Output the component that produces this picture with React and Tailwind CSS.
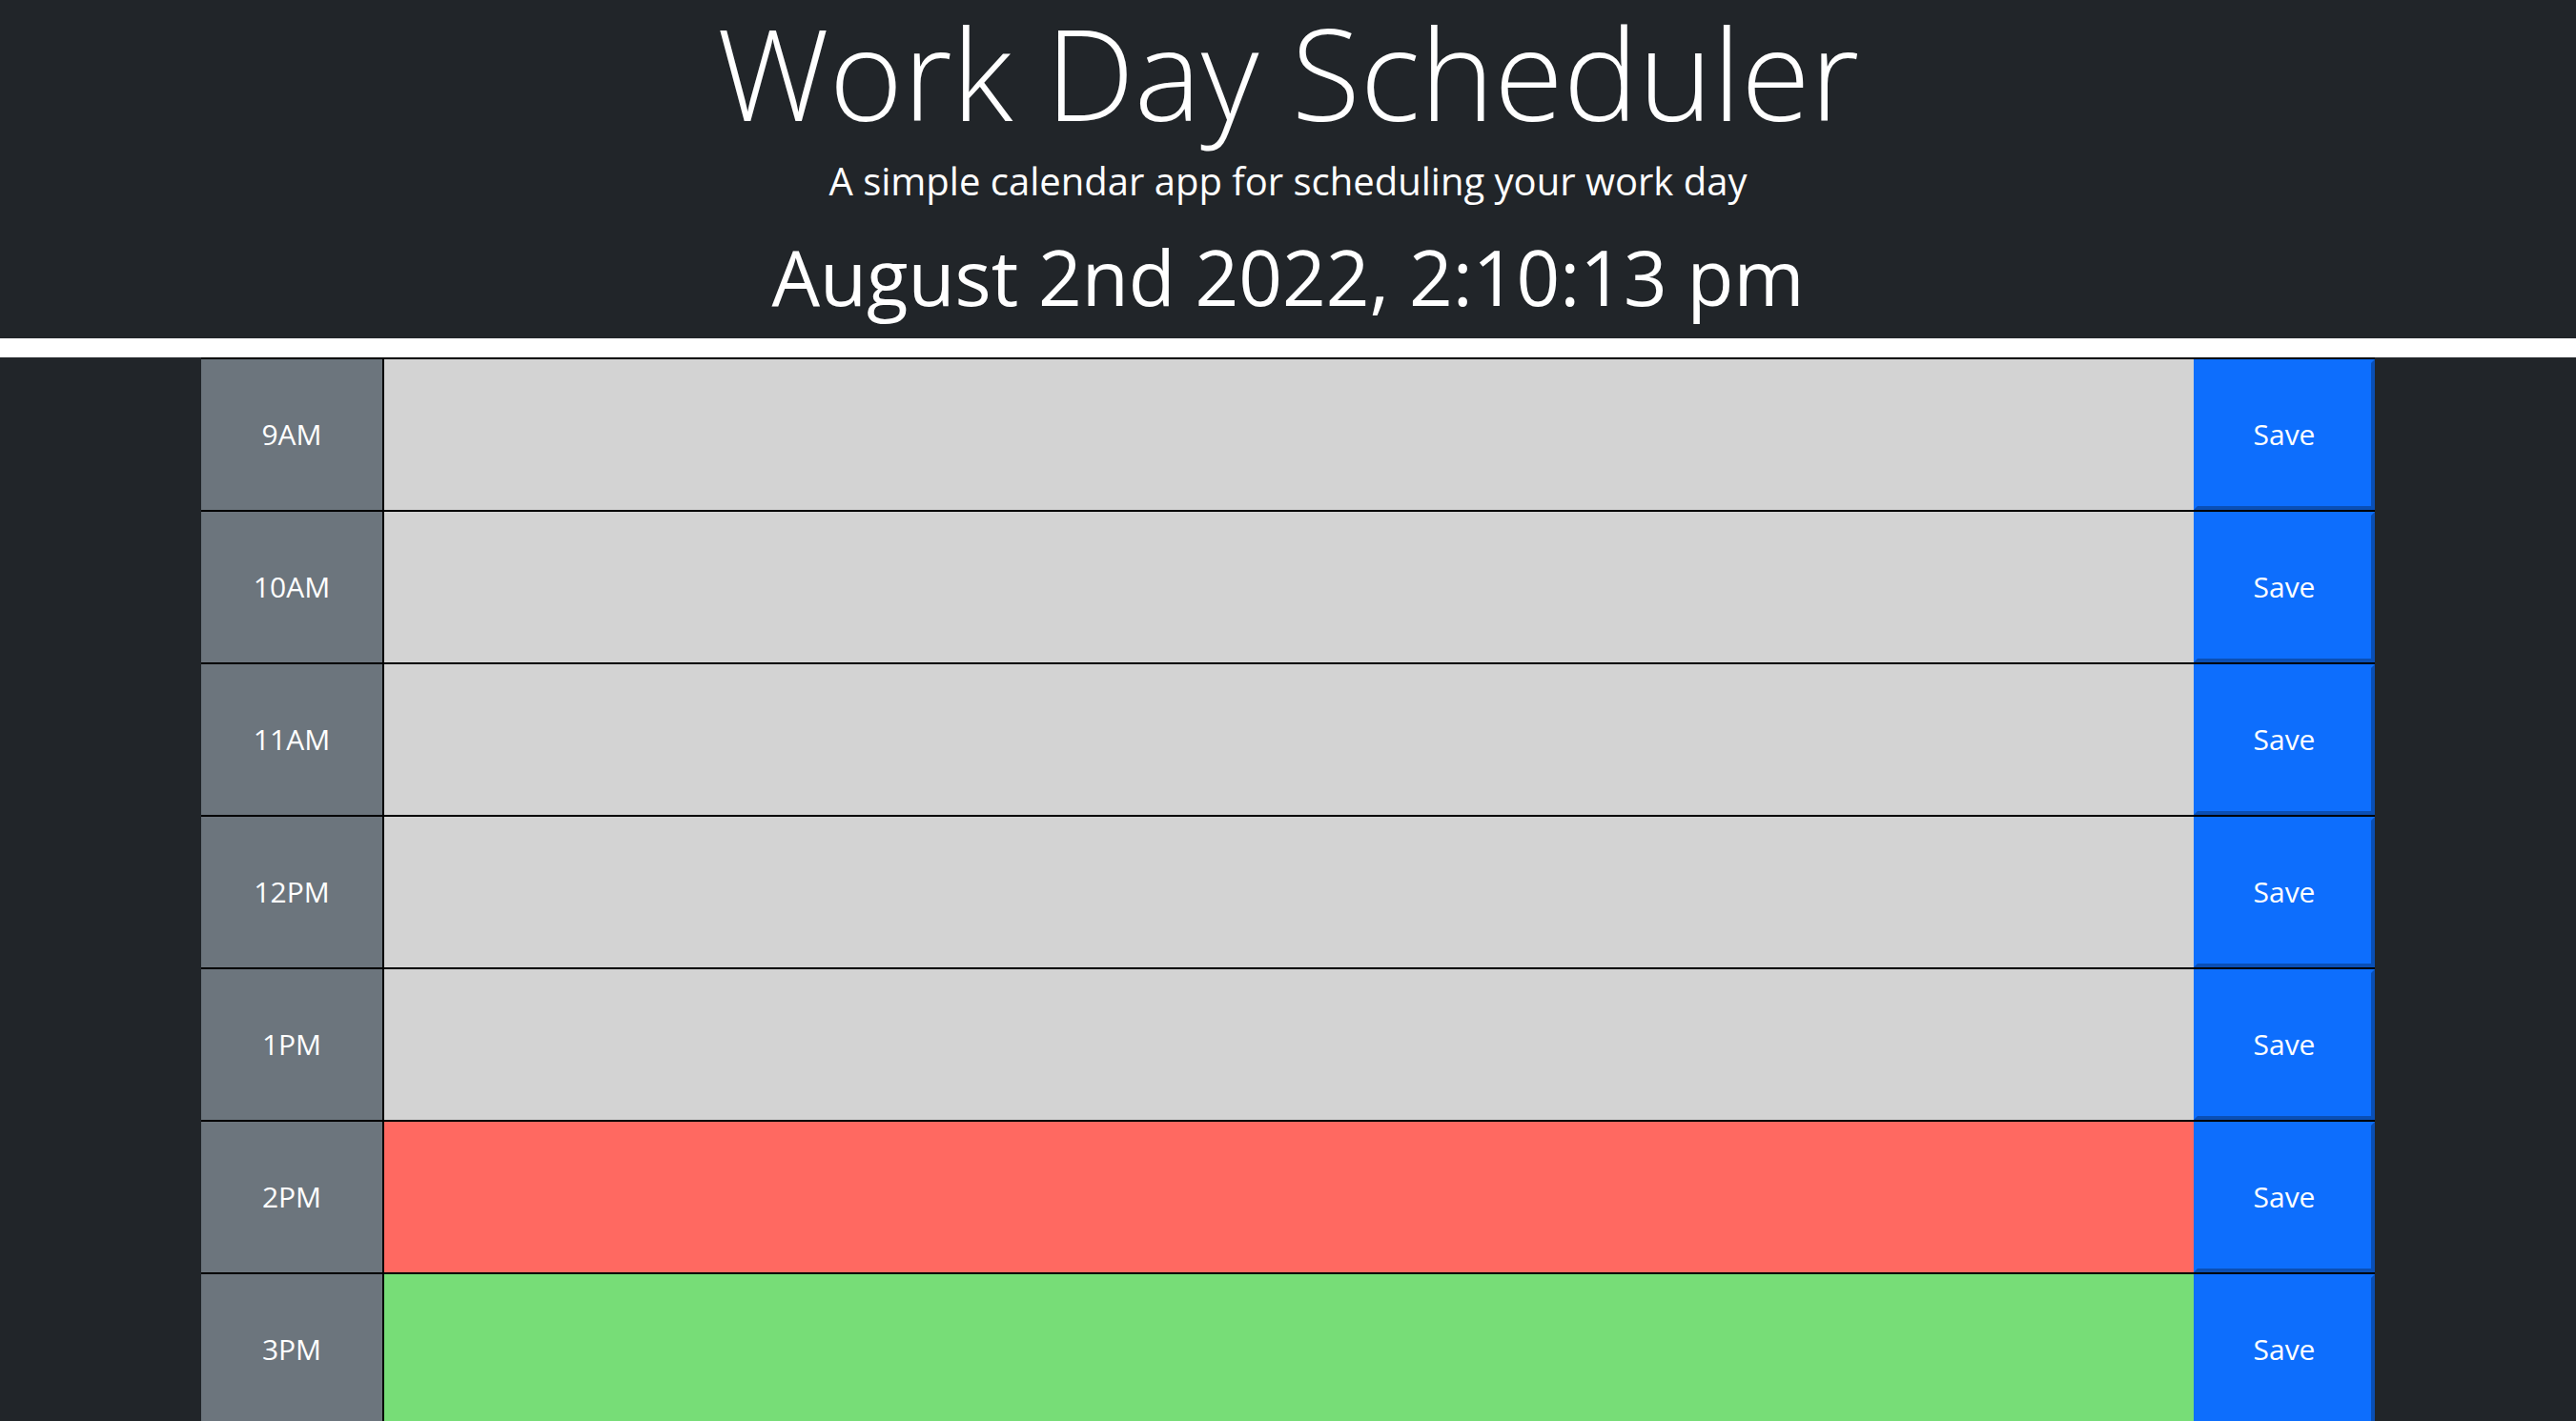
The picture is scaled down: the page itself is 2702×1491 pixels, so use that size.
import React from "react";

const hours = [
  { label: "9AM", tense: "past" },
  { label: "10AM", tense: "past" },
  { label: "11AM", tense: "past" },
  { label: "12PM", tense: "past" },
  { label: "1PM", tense: "past" },
  { label: "2PM", tense: "present" },
  { label: "3PM", tense: "future" },
  { label: "4PM", tense: "future" },
  { label: "5PM", tense: "future" },
];

// couleurs par état de l'heure
const tenseBg = {
  past: "bg-[#d3d3d3]",
  present: "bg-[#ff6961]",
  future: "bg-[#77dd77]",
};

function HourRow({ label, tense }) {
  return (
    <div className="flex h-[160px] border-t-2 border-black">
      <div className="flex w-[192px] shrink-0 items-center justify-center border-r-2 border-black bg-[#6c757d] pb-[2px] text-[30px] text-white">
        {label}
      </div>
      <textarea className={`flex-1 resize-none outline-none ${tenseBg[tense]}`} />
      <button className="w-[190px] shrink-0 border-4 border-[#0d6efd] border-r-[#0a4fb5] border-b-[#0a4fb5] bg-[#0d6efd] pb-[2px] text-[30px] text-white">
        Save
      </button>
    </div>
  );
}

export default function App() {
  return (
    <div className="min-h-screen bg-[#212529] font-['Open_Sans',sans-serif]">
      <header className="flex flex-col items-center border-b-[20px] border-white pb-[23px] pt-[10px] text-white">
        <h1 className="text-[132px] font-light leading-[132px]">Work Day Scheduler</h1>
        <p className="mt-[28px] text-[40px] font-normal leading-[40px]">
          A simple calendar app for scheduling your work day
        </p>
        <p className="mt-[40px] text-[80px] font-normal leading-[80px] pb-[2px]">August 2nd 2022, 2:10:13 pm</p>
      </header>

      <div className="mx-auto w-[2280px]">
        {hours.map((h) => (
          <HourRow key={h.label} label={h.label} tense={h.tense} />
        ))}
      </div>
    </div>
  );
}
